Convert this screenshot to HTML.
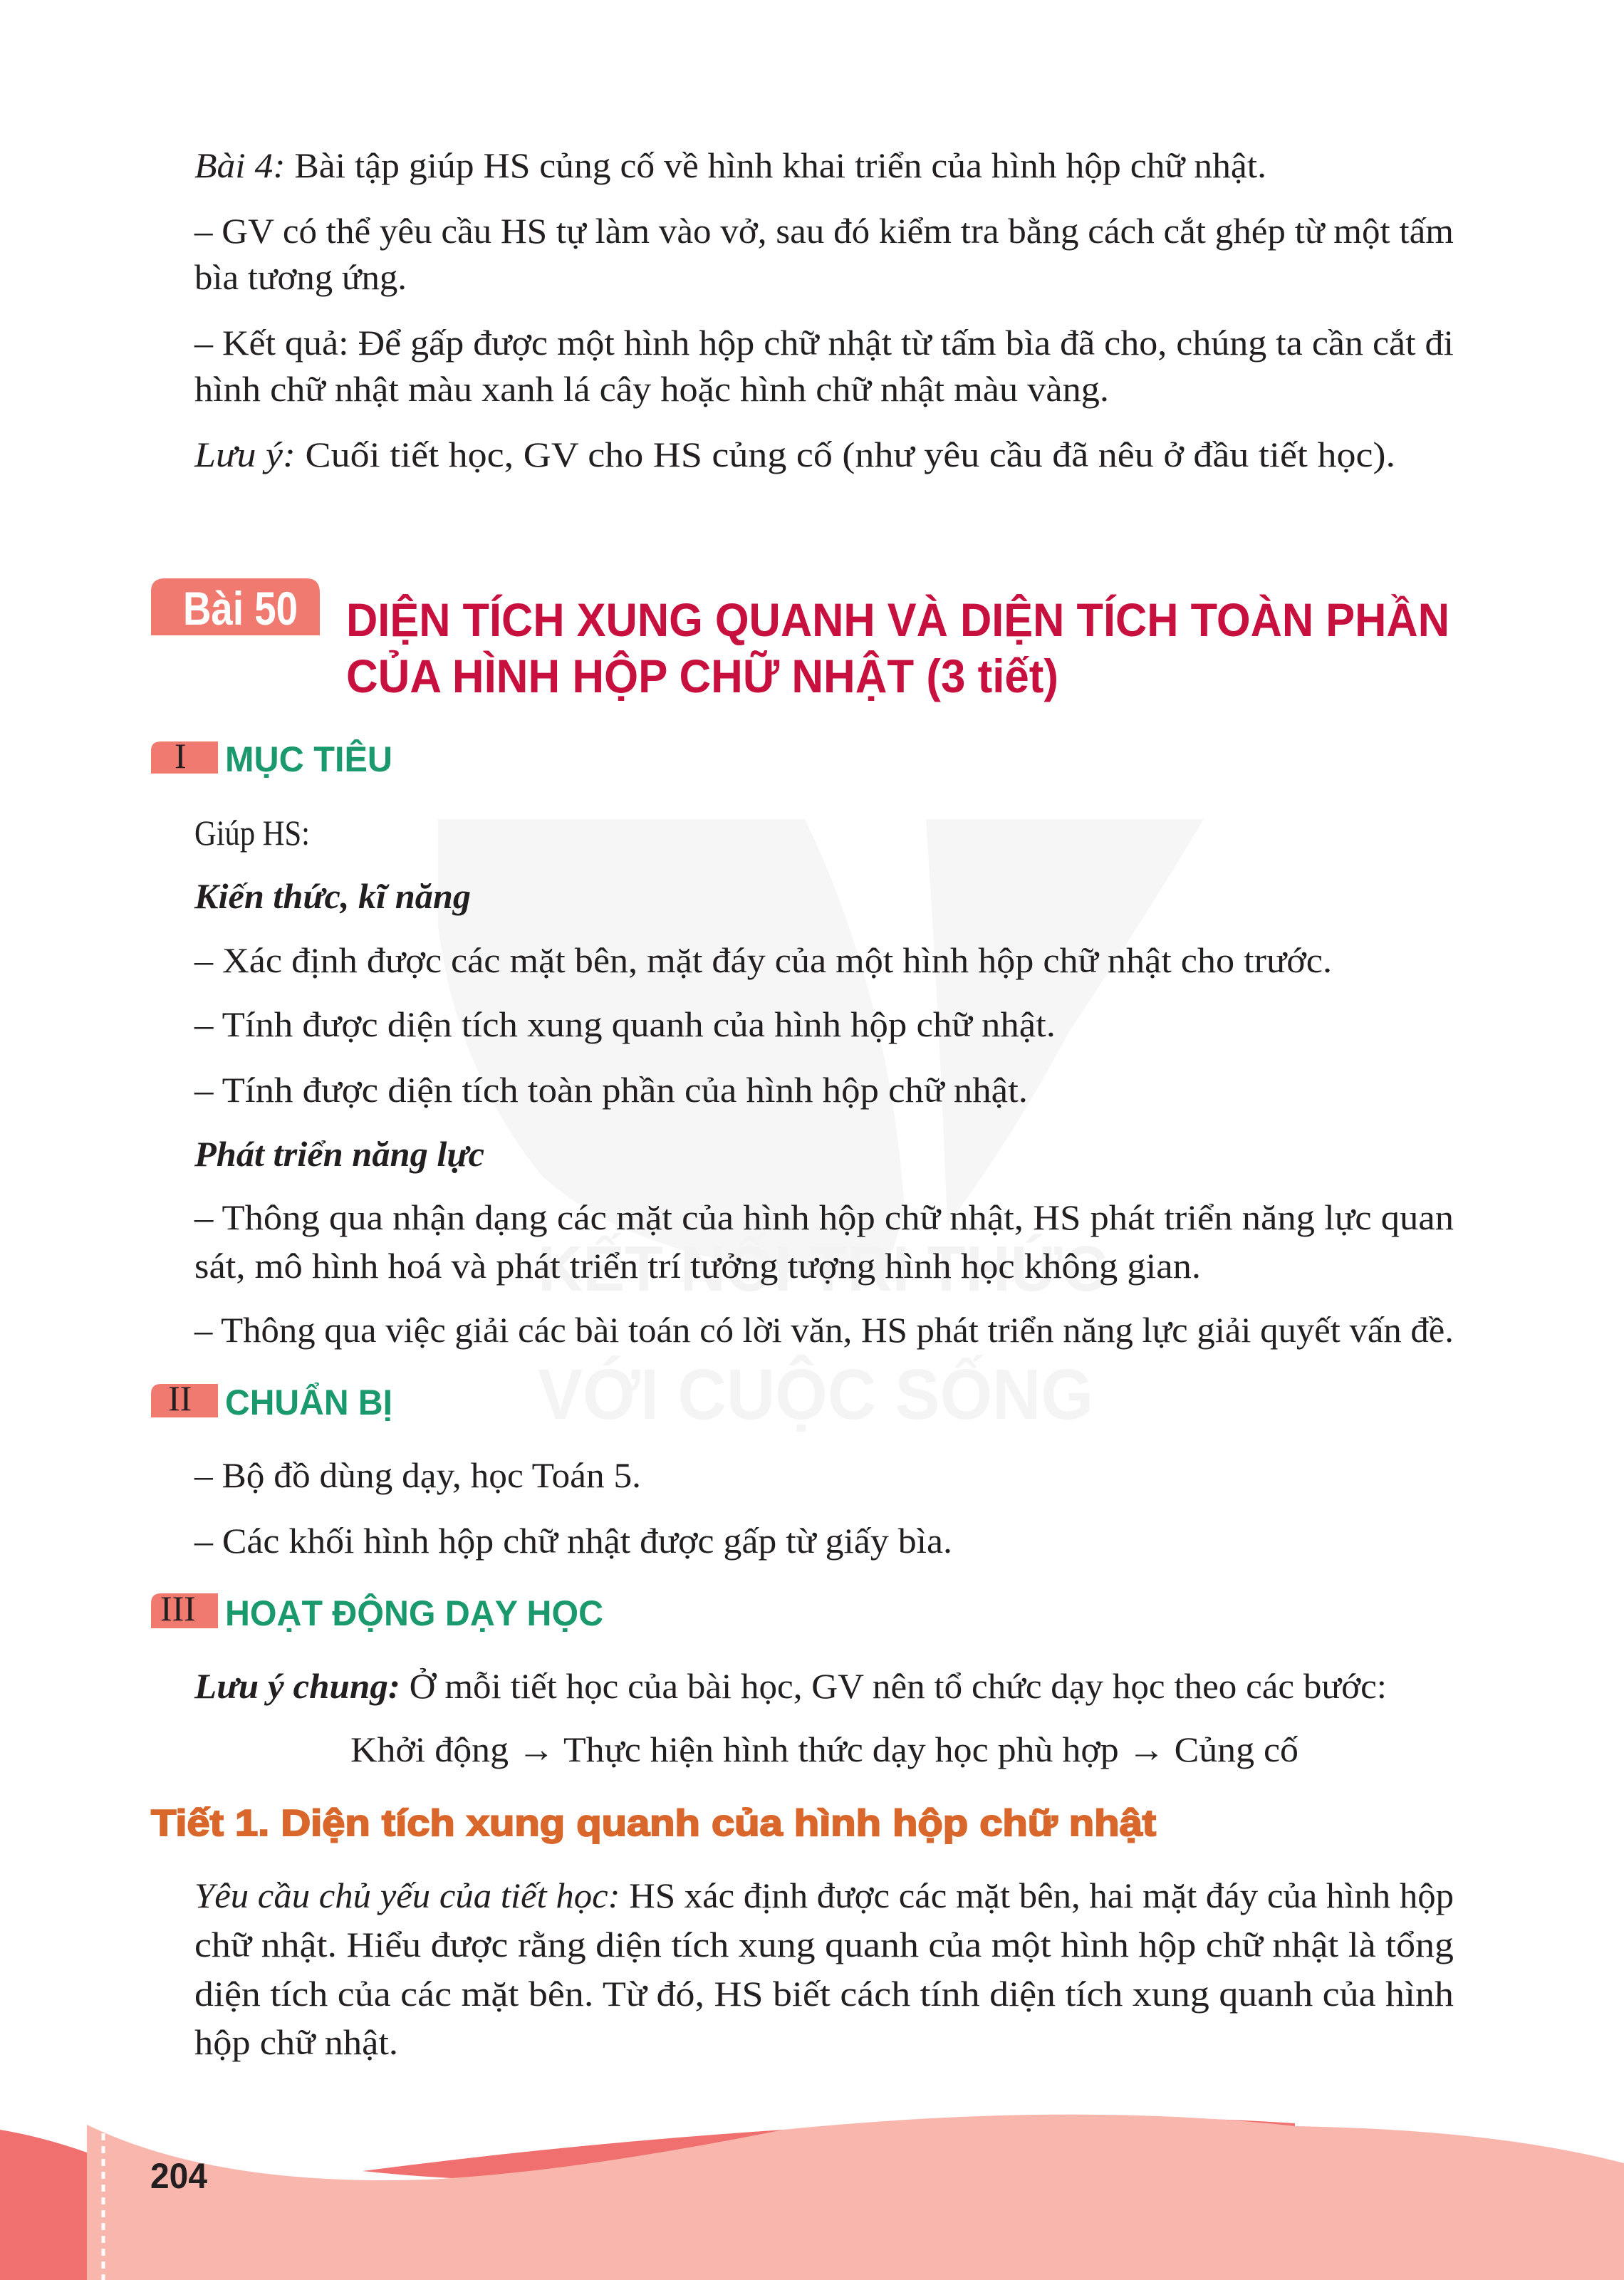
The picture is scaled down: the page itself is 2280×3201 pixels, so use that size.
<!DOCTYPE html>
<html><head><meta charset="utf-8"><style>
html,body{margin:0;padding:0;background:#fff;}
svg{display:block}
.b{font-family:"Liberation Serif",serif;font-size:50px;fill:#231f20}
.i{font-style:italic}
.bi{font-style:italic;font-weight:bold}
.h{font-family:"Liberation Sans",sans-serif;font-weight:bold}
</style></head><body>
<svg width="2280" height="3201" viewBox="0 0 2280 3201" xmlns="http://www.w3.org/2000/svg">
<!-- watermark -->
<g fill="#f6f6f6">
<path d="M615 1150 L1130 1150 Q1250 1400 1270 1700 L1240 1800 Q900 1780 760 1650 Q640 1500 615 1300 Z"/>
<path d="M1300 1150 L1690 1150 Q1600 1300 1500 1450 Q1420 1600 1330 1720 Q1320 1450 1300 1150 Z"/>
</g>
<text class="h" x="755" y="1812" font-size="90" fill="#f3f3f3" textLength="800" lengthAdjust="spacingAndGlyphs">KẾT NỐI TRI THỨC</text>
<text class="h" x="755" y="1992" font-size="100" fill="#f4f4f4" textLength="780" lengthAdjust="spacingAndGlyphs">VỚI CUỘC SỐNG</text>

<!-- top paragraphs -->
<text class="b" x="273" y="249" textLength="1505" lengthAdjust="spacingAndGlyphs"><tspan class="i">Bài 4:</tspan> Bài tập giúp HS củng cố về hình khai triển của hình hộp chữ nhật.</text>
<text class="b" x="273" y="341" textLength="1768" lengthAdjust="spacingAndGlyphs">– GV có thể yêu cầu HS tự làm vào vở, sau đó kiểm tra bằng cách cắt ghép từ một tấm</text>
<text class="b" x="273" y="406" textLength="298" lengthAdjust="spacingAndGlyphs">bìa tương ứng.</text>
<text class="b" x="273" y="498" textLength="1768" lengthAdjust="spacingAndGlyphs">– Kết quả: Để gấp được một hình hộp chữ nhật từ tấm bìa đã cho, chúng ta cần cắt đi</text>
<text class="b" x="273" y="563" textLength="1284" lengthAdjust="spacingAndGlyphs">hình chữ nhật màu xanh lá cây hoặc hình chữ nhật màu vàng.</text>
<text class="b" x="273" y="655" textLength="1686" lengthAdjust="spacingAndGlyphs"><tspan class="i">Lưu ý:</tspan> Cuối tiết học, GV cho HS củng cố (như yêu cầu đã nêu ở đầu tiết học).</text>

<!-- Bài 50 -->
<path d="M212 892 L212 830 Q212 812 232 812 L430 812 Q449 812 449 832 L449 892 Z" fill="#f07a70"/>
<text class="h" x="257" y="877" font-size="66" fill="#fff" textLength="161" lengthAdjust="spacingAndGlyphs">Bài 50</text>
<text class="h" x="486" y="893" font-size="66" fill="#c8103f" textLength="1549" lengthAdjust="spacingAndGlyphs">DIỆN TÍCH XUNG QUANH VÀ DIỆN TÍCH TOÀN PHẦN</text>
<text class="h" x="486" y="972" font-size="66" fill="#c8103f" textLength="1000" lengthAdjust="spacingAndGlyphs">CỦA HÌNH HỘP CHỮ NHẬT (3 tiết)</text>

<!-- I -->
<path d="M212 1086 L212 1054 Q212 1041 226 1041 L306 1041 L306 1086 Z" fill="#f07a70"/>
<text class="b" x="245" y="1078" font-size="40" fill="#fff">I</text>
<text class="h" x="316" y="1083" font-size="50" fill="#1a9a6c" textLength="235" lengthAdjust="spacingAndGlyphs">MỤC TIÊU</text>
<text class="b" x="273" y="1186" textLength="162" lengthAdjust="spacingAndGlyphs">Giúp HS:</text>
<text class="b bi" x="273" y="1275" textLength="388" lengthAdjust="spacingAndGlyphs">Kiến thức, kĩ năng</text>
<text class="b" x="273" y="1365" textLength="1597" lengthAdjust="spacingAndGlyphs">– Xác định được các mặt bên, mặt đáy của một hình hộp chữ nhật cho trước.</text>
<text class="b" x="273" y="1455" textLength="1209" lengthAdjust="spacingAndGlyphs">– Tính được diện tích xung quanh của hình hộp chữ nhật.</text>
<text class="b" x="273" y="1547" textLength="1170" lengthAdjust="spacingAndGlyphs">– Tính được diện tích toàn phần của hình hộp chữ nhật.</text>
<text class="b bi" x="273" y="1637" textLength="407" lengthAdjust="spacingAndGlyphs">Phát triển năng lực</text>
<text class="b" x="273" y="1726" textLength="1768" lengthAdjust="spacingAndGlyphs">– Thông qua nhận dạng các mặt của hình hộp chữ nhật, HS phát triển năng lực quan</text>
<text class="b" x="273" y="1794" textLength="1413" lengthAdjust="spacingAndGlyphs">sát, mô hình hoá và phát triển trí tưởng tượng hình học không gian.</text>
<text class="b" x="273" y="1884" textLength="1768" lengthAdjust="spacingAndGlyphs">– Thông qua việc giải các bài toán có lời văn, HS phát triển năng lực giải quyết vấn đề.</text>

<!-- II -->
<path d="M212 1990 L212 1957 Q212 1943 226 1943 L306 1943 L306 1990 Z" fill="#f07a70"/>
<text class="b" x="236" y="1980" font-size="40" fill="#fff">II</text>
<text class="h" x="316" y="1986" font-size="50" fill="#1a9a6c" textLength="235" lengthAdjust="spacingAndGlyphs">CHUẨN BỊ</text>
<text class="b" x="273" y="2088" textLength="627" lengthAdjust="spacingAndGlyphs">– Bộ đồ dùng dạy, học Toán 5.</text>
<text class="b" x="273" y="2180" textLength="1064" lengthAdjust="spacingAndGlyphs">– Các khối hình hộp chữ nhật được gấp từ giấy bìa.</text>

<!-- III -->
<path d="M212 2286 L212 2251 Q212 2237 226 2237 L306 2237 L306 2286 Z" fill="#f07a70"/>
<text class="b" x="225" y="2275" font-size="40" fill="#fff">III</text>
<text class="h" x="316" y="2282" font-size="50" fill="#1a9a6c" textLength="531" lengthAdjust="spacingAndGlyphs">HOẠT ĐỘNG DẠY HỌC</text>
<text class="b" x="273" y="2384" textLength="1674" lengthAdjust="spacingAndGlyphs"><tspan class="bi">Lưu ý chung:</tspan> Ở mỗi tiết học của bài học, GV nên tổ chức dạy học theo các bước:</text>
<text class="b" x="492" y="2473" textLength="1331" lengthAdjust="spacingAndGlyphs">Khởi động → Thực hiện hình thức dạy học phù hợp → Củng cố</text>

<text class="h" x="212" y="2577" font-size="52" fill="#d9662a" stroke="#d9662a" stroke-width="2" textLength="1411" lengthAdjust="spacingAndGlyphs">Tiết 1. Diện tích xung quanh của hình hộp chữ nhật</text>

<text class="b" x="273" y="2678" textLength="1768" lengthAdjust="spacingAndGlyphs"><tspan class="i">Yêu cầu chủ yếu của tiết học:</tspan> HS xác định được các mặt bên, hai mặt đáy của hình hộp</text>
<text class="b" x="273" y="2747" textLength="1768" lengthAdjust="spacingAndGlyphs">chữ nhật. Hiểu được rằng diện tích xung quanh của một hình hộp chữ nhật là tổng</text>
<text class="b" x="273" y="2816" textLength="1768" lengthAdjust="spacingAndGlyphs">diện tích của các mặt bên. Từ đó, HS biết cách tính diện tích xung quanh của hình</text>
<text class="b" x="273" y="2884" textLength="286" lengthAdjust="spacingAndGlyphs">hộp chữ nhật.</text>

<!-- footer -->
<path d="M0 2990 Q60 3000 122 3022 L122 3201 L0 3201 Z" fill="#f07070"/>
<path d="M509 3048 Q800 3010 1100 2990 Q1500 2960 1818 2981 L1818 3000 Q1400 3000 1018 3047 Q760 3075 509 3048 Z" fill="#f07070"/>
<path d="M122 2983 Q300 3070 600 3060 Q800 3050 1100 2990 Q1500 2950 1818 2985 Q2100 2990 2280 3037 L2280 3201 L122 3201 Z" fill="#f9b6ac"/>
<line x1="145" y1="2995" x2="145" y2="3201" stroke="#fff" stroke-width="5" stroke-dasharray="10 8"/>
<text class="h" x="211" y="3072" font-size="50" fill="#231f20" textLength="80" lengthAdjust="spacingAndGlyphs">204</text>
</svg>
</body></html>
